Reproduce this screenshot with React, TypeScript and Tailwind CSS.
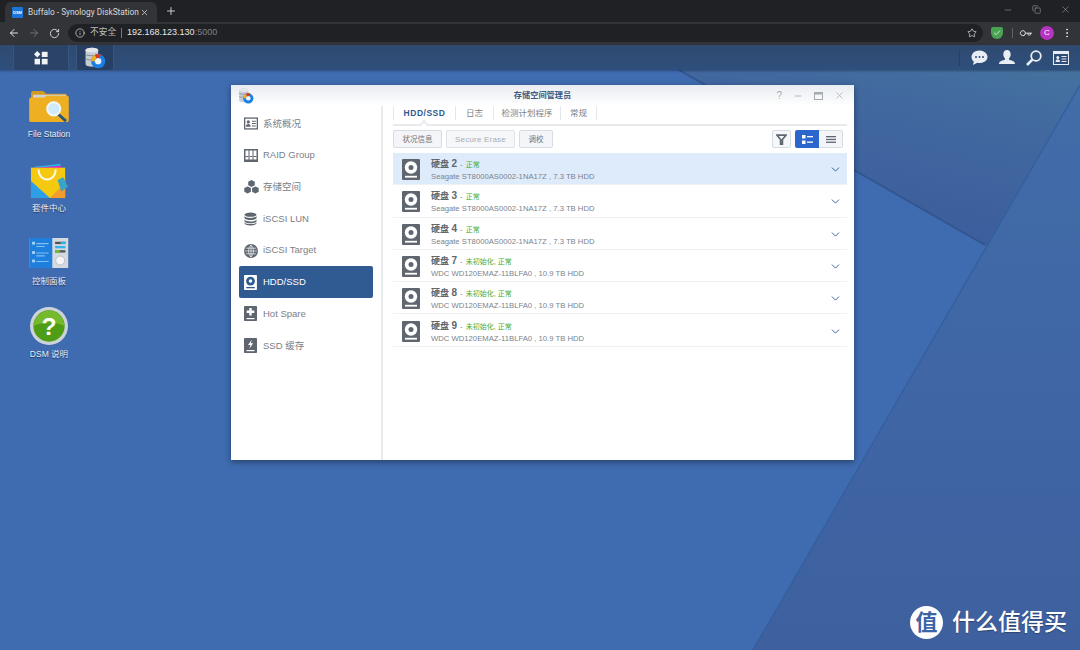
import React from 'react';
import { ArrowLeft, ArrowRight, RotateCw, Info, Star, X, Plus, Minus, Copy, ChevronDown, MoreVertical, Key, Check } from 'lucide-react';

const FONT = "font-['Liberation_Sans','Noto_Sans_CJK_SC',sans-serif]";

const HddIcon = ({ light = false, width = 18, height = 21 }: { light?: boolean; width?: number; height?: number }) => (
  <svg width={width} height={height} viewBox="0 0 18 21">
    <rect width="18" height="21" rx="1" fill={light ? '#fff' : '#5f6670'} />
    <circle cx="9" cy="8.5" r="6.2" fill={light ? '#2f5a92' : '#fff'} />
    <circle cx="9" cy="8.5" r="2.5" fill={light ? '#fff' : '#5f6670'} />
    <rect x="3" y="16.8" width="12" height="1.8" fill={light ? '#2f5a92' : '#fff'} />
  </svg>
);

const StorageLogo = ({ size = 28 }: { size?: number }) => (
  <svg width={size} height={size} viewBox="0 0 28 28">
    <path d="M2 4c0-2 4-3 8-3s8 1 8 3v18c0 2-4 3-8 3s-8-1-8-3z" fill="#c6ccd3" />
    <ellipse cx="10" cy="4" rx="8" ry="3" fill="#e4e7ea" />
    <path d="M2 9.500c2 2 14 2 16 0M2 15c2 2 14 2 16 0" stroke="#7f8a96" strokeWidth="1.200" fill="none" />
    <circle cx="18" cy="18" r="9" fill="#1b80e4" />
    <circle cx="18" cy="18" r="4" fill="#eef4fb" />
    <path d="M9 18a9 9 0 0 1 5-8l2 4.400A4 4 0 0 0 14 18z" fill="#f2b01f" />
    <path d="M14 10a9 9 0 0 1 7.500-.400l-1.700 4.800a4 4 0 0 0-3.800 0z" fill="#d93a25" />
  </svg>
);

const SideIcon = ({ name }: { name: string }) => {
  const c = '#5f6670';
  if (name === 'overview')
    return (
      <svg width="14" height="13" viewBox="0 0 15 13">
        <rect x=".7" y=".7" width="13.600" height="11.600" fill="#fff" stroke={c} strokeWidth="1.400" />
        <circle cx="4.600" cy="4.800" r="1.700" fill={c} />
        <path d="M2 10c0-2 1.200-3 2.600-3s2.600 1 2.600 3z" fill={c} />
        <path d="M8.500 4h4.200M8.500 6.600h4.200M8.500 9.200h4.200" stroke={c} strokeWidth="1.100" />
      </svg>
    );
  if (name === 'raid')
    return (
      <svg width="14" height="13" viewBox="0 0 14 13">
        <rect width="14" height="13" fill={c} />
        <path d="M1.500 1.500h3v9h-3zM5.500 1.500h3v9h-3zM9.500 1.500h3v9h-3z" fill="#fff" />
        <path d="M1.500 7.500h3M5.500 7.500h3M9.500 7.500h3" stroke={c} />
      </svg>
    );
  if (name === 'space')
    return (
      <svg width="15" height="14" viewBox="0 0 15 14" fill={c}>
        <path d="M7.500 0l3.300 1.700v3.600L7.500 7 4.200 5.300V1.700z" />
        <path d="M3.600 6.400l3.300 1.700v3.600l-3.300 1.700-3.300-1.700V8.100z" />
        <path d="M11.400 6.400l3.300 1.700v3.600l-3.300 1.700-3.300-1.700V8.100z" />
      </svg>
    );
  if (name === 'lun')
    return (
      <svg width="13" height="14" viewBox="0 0 14 14" fill={c}>
        <ellipse cx="7" cy="2.300" rx="6.500" ry="2.300" />
        <path d="M.5 3.800c1 1.500 3.500 2 6.500 2s5.500-.5 6.500-2v2.200c-.6 1.500-3.300 2.200-6.500 2.200S1.100 7.500.5 6z" />
        <path d="M.5 7.600c1 1.500 3.500 2 6.500 2s5.500-.5 6.500-2v1.800c-.6 1.500-3.300 2.200-6.500 2.200S1.100 10.900.5 9.400z" />
        <path d="M.5 10.700c1 1.300 3.500 1.800 6.500 1.800s5.500-.5 6.500-1.800v.9c-.6 1.500-3.300 2.400-6.500 2.400S1.100 13.100.5 11.600z" />
      </svg>
    );
  if (name === 'target')
    return (
      <svg width="14" height="14" viewBox="0 0 15 15">
        <circle cx="7.500" cy="7.500" r="7.500" fill={c} />
        <path d="M7.500 1v13M1 7.500h13M2 4.500h11M2 10.500h11M7.500 1C4 4.500 4 10.500 7.500 14M7.500 1C11 4.500 11 10.500 7.500 14" stroke="#fff" strokeWidth=".7" fill="none" />
      </svg>
    );
  if (name === 'hdd') return <HddIcon light width={13} height={15} />;
  return (
    <svg width="13" height="15" viewBox="0 0 13 15">
      <rect width="13" height="15" rx=".8" fill={c} />
      {name === 'spare' ? (
        <path d="M5.300 2h2.400v2.600h2.600V7H7.700v2.600H5.300V7H2.700V4.600h2.600z" fill="#fff" />
      ) : (
        <path d="M7.800 1.800L4 7h2.400l-1 3.500L9.300 5.300H6.900z" fill="#fff" />
      )}
      <rect x="2.500" y="12" width="8" height="1.200" fill="#fff" />
    </svg>
  );
};

const sideItems = [
  { key: 'overview', label: '系统概况' },
  { key: 'raid', label: 'RAID Group' },
  { key: 'space', label: '存储空间' },
  { key: 'lun', label: 'iSCSI LUN' },
  { key: 'target', label: 'iSCSI Target' },
  { key: 'hdd', label: 'HDD/SSD' },
  { key: 'spare', label: 'Hot Spare' },
  { key: 'ssd', label: 'SSD 缓存' },
];

const seagate = 'Seagate ST8000AS0002-1NA17Z , 7.3 TB HDD';
const wdc = 'WDC WD120EMAZ-11BLFA0 , 10.9 TB HDD';
const disks = [
  { n: 2, status: '正常', model: seagate },
  { n: 3, status: '正常', model: seagate },
  { n: 4, status: '正常', model: seagate },
  { n: 7, status: '未初始化, 正常', model: wdc },
  { n: 8, status: '未初始化, 正常', model: wdc },
  { n: 9, status: '未初始化, 正常', model: wdc },
];

// desktop wallpaper facets, coordinates are relative to the desktop area (y - 70)
const Wallpaper = () => (
  <svg className="absolute inset-0" width="1080" height="580" viewBox="0 0 1080 580">
    <defs>
      <linearGradient id="facetTop" x1="1" y1="0" x2="0.5" y2="1">
        <stop offset="0" stopColor="#44729f" />
        <stop offset="0.4" stopColor="#41679f" />
        <stop offset="1" stopColor="#3b5c9c" />
      </linearGradient>
      <linearGradient id="facetRight" x1="0.6" y1="0" x2="0.6" y2="1">
        <stop offset="0" stopColor="#416da9" />
        <stop offset="0.5" stopColor="#4066a5" />
        <stop offset="1" stopColor="#3e609f" />
      </linearGradient>
    </defs>
    <rect width="1080" height="580" fill="#3f6bb0" />
    <polygon points="679,0 1080,0 1080,15 987,176" fill="url(#facetTop)" />
    <polygon points="987,176 1080,15 1080,580 753,580" fill="url(#facetRight)" />
    <path d="M679 0L985 175" stroke="#32568f" strokeWidth="2" fill="none" />
    <path d="M1080 15L987 176L753 580" stroke="#35609f" strokeWidth="1.500" fill="none" />
  </svg>
);

const DesktopIcon = ({ label, top, children }: { label: string; top: number; children: React.ReactNode }) => (
  <div className="absolute left-[9px] w-[80px] flex flex-col items-center" style={{ top }}>
    <div className="h-[40px] flex items-center justify-center">{children}</div>
    <span className="mt-[3px] text-[8.5px] leading-[11px] text-[#e9eff8] [text-shadow:0_1px_1px_rgba(0,0,0,0.5)]">{label}</span>
  </div>
);

const Folder = () => (
  <svg width="40" height="33" viewBox="0 0 42 35">
    <path d="M2 3q0-2 2-2h11l3 3h20q2 0 2 2v5H2z" fill="#d19a20" />
    <rect x="4" y="5" width="35" height="6" fill="#cfd3d6" />
    <path d="M0 10q0-2 2-2h14l2-2h22q2 0 2 2v24q0 2-2 2H2q-2 0-2-2z" fill="#eeb022" />
    <path d="M28 23l11 10" stroke="#28567f" strokeWidth="3" />
    <circle cx="26" cy="20" r="7" fill="#cfeafb" stroke="#f4f7fa" strokeWidth="2" />
  </svg>
);

const Bag = () => (
  <svg width="40" height="38" viewBox="0 0 42 40">
    <path d="M6 6l27-3 1 8H7z" fill="#28b5e0" />
    <path d="M6 7l28-2v6H6z" fill="#d41fd0" />
    <rect x="2" y="7" width="36" height="32" fill="#f5c90f" />
    <path d="M2 21l20 18H2z" fill="#2e9fe6" />
    <path d="M22 39l16-16v16z" fill="#f29b2e" />
    <path d="M10 9c0 14 18 14 18 0" stroke="#fff8e6" strokeWidth="2" fill="none" />
    <path d="M30 20l6-3 5 10-7 5z" fill="#3aa3c8" />
  </svg>
);

const Panel = () => (
  <svg width="40" height="30" viewBox="0 0 41 32">
    <rect width="41" height="32" fill="#d5dadf" />
    <rect width="24" height="32" fill="#1f7fdd" />
    <path d="M7 6h13M7 9h9M7 16h13M7 19h9M7 25h13" stroke="#7fc1f5" strokeWidth="1.200" />
    <rect x="2.500" y="4" width="3" height="3" fill="#a6d5f8" />
    <rect x="2.500" y="14" width="3" height="3" fill="#a6d5f8" />
    <rect x="2.500" y="23" width="3" height="3" fill="#a6d5f8" />
    <rect x="27" y="4" width="11" height="2.500" fill="#555" />
    <rect x="33" y="4" width="5" height="2.500" fill="#2fb4e8" />
    <rect x="27" y="8.500" width="11" height="2.500" fill="#2fb4e8" />
    <rect x="27" y="13" width="11" height="2.500" fill="#555" />
    <rect x="27" y="13" width="5" height="2.500" fill="#6cc625" />
    <circle cx="32.500" cy="24" r="4.800" fill="#f3f5f7" stroke="#b6bec6" />
  </svg>
);

const Help = () => (
  <svg width="38" height="38" viewBox="0 0 40 40">
    <circle cx="20" cy="20" r="20" fill="#ccd3d8" />
    <circle cx="20" cy="20" r="16.500" fill="#4e9d14" />
    <path d="M4 20a16 16 0 0 1 32 0c-8-5-24-5-32 0z" fill="#74ba2c" />
    <text x="20" y="29" textAnchor="middle" fontFamily="Liberation Sans" fontWeight="700" fontSize="26" fill="#fff">?</text>
  </svg>
);

export default function App() {
  return (
    <div className={`w-[1080px] h-[650px] overflow-hidden flex flex-col bg-[#3f6bb0] ${FONT}`}>
      {/* browser tab strip */}
      <div className="h-[22px] bg-[#202124] flex items-end pl-[5px] relative shrink-0">
        <div className="w-[152px] h-[20px] bg-[#323437] rounded-t-[6px] flex items-center pl-[7px] text-[#d8dadc]">
          <span className="w-[11px] h-[11px] bg-[#1b74d8] rounded-[1px] text-white text-[4px] leading-[11px] text-center font-bold mr-[5px]">DSM</span>
          <span className="flex-1 text-[8.3px] font-['Roboto',sans-serif] whitespace-nowrap">Buffalo - Synology DiskStation</span>
          <X size={9} strokeWidth={2} className="mr-[8px] text-[#d8dadc]" />
        </div>
        <Plus size={12} strokeWidth={1.8} className="ml-[8px] mb-[5px] text-[#d8dadc]" />
        <div className="ml-auto flex items-center gap-[19px] pr-[9px] mb-[7px] text-[#a9abae]">
          <Minus size={10} strokeWidth={1.2} />
          <Copy size={9} strokeWidth={1.4} />
          <X size={11} strokeWidth={1.2} />
        </div>
      </div>
      {/* address bar */}
      <div className="h-[23px] bg-[#323437] flex items-center shrink-0 pb-[1px]">
        <ArrowLeft size={12} strokeWidth={2} className="ml-[8px] text-[#e2e3e5]" />
        <ArrowRight size={12} strokeWidth={2} className="ml-[8px] text-[#6f7174]" />
        <RotateCw size={11} strokeWidth={2} className="ml-[9px] text-[#dcdde0]" />
        <div className="ml-[8px] w-[915px] h-[18px] rounded-full bg-[#202124] flex items-center pl-[7px] pr-[6px]">
          <Info size={10} strokeWidth={1.8} className="text-[#d5d6d8]" />
          <span className="ml-[5px] text-[#b8babc] text-[8.7px]">不安全</span>
          <span className="mx-[5px] w-px h-[10px] bg-[#77797c]" />
          <span className="text-[#e6e7e9] text-[9px]">192.168.123.130</span>
          <span className="text-[#7f8184] text-[9px]">:5000</span>
          <Star size={10} strokeWidth={1.8} className="ml-auto text-[#d5d6d8]" />
        </div>
        <div className="ml-[8px] w-[12px] h-[12px] bg-[#4aa255] rounded-b-[6px] rounded-t-[2px] flex items-center justify-center">
          <Check size={8} strokeWidth={3} className="text-[#cfe9d2]" />
        </div>
        <span className="ml-[9px] w-px h-[10px] bg-[#5f6164]" />
        <Key size={11} strokeWidth={2} className="ml-[7px] text-[#dcdde0] rotate-45" />
        <span className="ml-[9px] w-[14px] h-[14px] rounded-full bg-[#b632c0] text-white text-[8px] leading-[14px] text-center">C</span>
        <MoreVertical size={12} strokeWidth={2} className="ml-[7px] text-[#dcdde0]" />
      </div>
      {/* DSM task bar */}
      <div className="h-[25px] bg-gradient-to-b from-[#2f4a70] to-[#2e4f7c] flex items-stretch relative shrink-0 shadow-[0_1px_2px_rgba(0,0,0,0.3)] z-10">
        <div className="ml-[13px] w-[56px] bg-[#2a4367] border-x border-[#38557d] flex items-center justify-center">
          <svg width="14" height="14" viewBox="0 0 14 14" fill="#f1f3f5">
            <path d="M3.200 0l3.200 3.200-3.200 3.200L0 3.200z" />
            <rect x="7.800" y=".8" width="5.800" height="5.200" />
            <rect x=".6" y="7.800" width="5.400" height="5.600" />
            <rect x="7.800" y="7.800" width="5.800" height="5.600" />
          </svg>
        </div>
        <div className="ml-[7px] w-[38px] bg-[#263f62] border-x border-[#38557d] flex items-center justify-center">
          <StorageLogo size={22} />
        </div>
        <div className="ml-auto flex items-center pr-[11px] gap-[11px]">
          <span className="w-px h-[16px] bg-[#263f62]" />
          <svg width="17" height="16" viewBox="0 0 17 16">
            <path d="M8.500 .5C4 .5.5 3.300.5 7c0 1.800.9 3.400 2.300 4.600L2 15l4.200-2.200c.7.200 1.500.3 2.300.3 4.500 0 8-2.800 8-6.100S13 .5 8.500 .5z" fill="#e8edf3" />
            <circle cx="5" cy="7" r="1" fill="#2e4c75" />
            <circle cx="8.500" cy="7" r="1" fill="#2e4c75" />
            <circle cx="12" cy="7" r="1" fill="#2e4c75" />
          </svg>
          <svg width="16" height="15" viewBox="0 0 16 15" fill="#e8edf3">
            <path d="M8 0c2.300 0 3.700 1.700 3.700 4.200 0 2-.9 3.400-1.700 4.400v1.200c2 .7 6 1 6 4.200H0c0-3.200 4-3.500 6-4.200V8.600C5.200 7.600 4.300 6.200 4.300 4.200 4.300 1.700 5.700 0 8 0z" />
          </svg>
          <svg width="16" height="16" viewBox="0 0 16 16" fill="none" stroke="#e8edf3">
            <circle cx="10" cy="6" r="4.800" strokeWidth="1.800" />
            <path d="M6.300 9.700L1 15" strokeWidth="2.600" />
          </svg>
          <svg width="16" height="14" viewBox="0 0 16 14">
            <rect x=".5" y=".5" width="15" height="13" fill="#2e4c75" stroke="#e8edf3" />
            <rect x="1" y="1" width="14" height="2" fill="#e8edf3" />
            <circle cx="4.800" cy="6.400" r="1.500" fill="#e8edf3" />
            <path d="M2.500 11c0-2 1-2.800 2.300-2.800S7 9 7 11z" fill="#e8edf3" />
            <path d="M8.500 5.500h5M8.500 8h5M8.500 10.500h5" stroke="#e8edf3" />
          </svg>
        </div>
      </div>

      {/* desktop */}
      <div className="relative flex-1">
        <Wallpaper />
        <DesktopIcon label="File Station" top={16}><Folder /></DesktopIcon>
        <DesktopIcon label="套件中心" top={90}><Bag /></DesktopIcon>
        <DesktopIcon label="控制面板" top={163}><Panel /></DesktopIcon>
        <DesktopIcon label="DSM 说明" top={236}><Help /></DesktopIcon>

        {/* storage manager window */}
        <div className="absolute left-[231px] top-[15px] w-[623px] h-[375px] bg-white flex flex-col shadow-[0_2px_6px_rgba(0,0,0,0.4)]">
          <div className="h-[21px] bg-gradient-to-b from-[#e9ecf1] to-white flex items-center relative shrink-0">
            <span className="ml-[7px] mt-[1px] flex"><StorageLogo size={16} /></span>
            <span className="absolute left-0 right-0 text-center text-[8.2px] font-bold text-[#3d5a7f] mt-[1px]">存储空间管理员</span>
            <div className="ml-auto mr-[9px] flex items-center gap-[11px] text-[#a3aab2]">
              <span className="text-[10px] leading-none">?</span>
              <Minus size={10} strokeWidth={2} />
              <svg width="9" height="8" viewBox="0 0 9 8" fill="none" stroke="currentColor">
                <rect x=".5" y=".5" width="8" height="7" />
                <rect x=".5" y=".5" width="8" height="1.500" fill="currentColor" />
              </svg>
              <X size={11} strokeWidth={1.6} />
            </div>
          </div>
          <div className="flex-1 flex min-h-0">
            {/* side menu */}
            <div className="w-[152px] border-r-2 border-[#e8ebee] shrink-0 pl-[8px] pr-[8px] pt-[2px]">
              {sideItems.map((item) => {
                const active = item.key === 'hdd';
                return (
                  <div
                    key={item.key}
                    className={`h-[31.7px] flex items-center rounded-[2px] text-[9.5px] ${active ? 'bg-[#2f5a92] text-white' : 'text-[#7a8088]'}`}
                  >
                    <span className="w-[19px] ml-[5px] flex items-center justify-start"><SideIcon name={item.key} /></span>
                    <span>{item.label}</span>
                  </div>
                );
              })}
            </div>
            {/* main panel */}
            <div className="flex-1 min-w-0 pl-[10px] pr-[7px] flex flex-col">
              <div className="h-[18px] flex items-start text-[8.5px] text-[#7c838b] border-b-2 border-[#e8ebee] box-content relative">
                <div className="w-[63px] h-[14px] flex items-center justify-center font-bold text-[#2f5a92] border-x border-[#e4e8ec] tracking-[0.5px]">HDD/SSD</div>
                <div className="w-[38px] h-[14px] flex items-center justify-center border-r border-[#e4e8ec]">日志</div>
                <div className="w-[67px] h-[14px] flex items-center justify-center border-r border-[#e4e8ec]">检测计划程序</div>
                <div className="w-[36px] h-[14px] flex items-center justify-center border-r border-[#e4e8ec]">常规</div>
                <span className="absolute left-[28px] bottom-[-3px] w-[6px] h-[6px] rotate-45 bg-white border-l-2 border-t-2 border-[#e8ebee]" />
              </div>
              <div className="flex items-center mt-[4px] h-[18px] text-[7.5px]">
                <button className="h-[18px] w-[49px] pt-[1px] bg-[#f3f5f8] border border-[#d6dce3] rounded-[2px] text-[#6d747c]">状况信息</button>
                <button className="ml-[4px] h-[18px] w-[69px] pt-[1px] bg-[#f5f7f9] border border-[#dfe4ea] rounded-[2px] text-[#a6adb5] text-[8px] tracking-[0.2px]">Secure Erase</button>
                <button className="ml-[4px] h-[18px] w-[34px] pt-[1px] bg-[#f3f5f8] border border-[#d6dce3] rounded-[2px] text-[#6d747c]">调校</button>
                <button className="ml-auto h-[18px] w-[19px] bg-[#f5f7f9] border border-[#d6dce3] rounded-[2px] flex items-center justify-center">
                  <svg width="11" height="11" viewBox="0 0 11 11" fill="none" stroke="#5f6670" strokeWidth="1.700">
                    <path d="M1 1.200h9L6.400 5.500v5H4.600v-5z" />
                  </svg>
                </button>
                <button className="ml-[4px] h-[18px] w-[24px] bg-[#2a66cc] rounded-l-[2px] flex items-center justify-center">
                  <svg width="11" height="9" viewBox="0 0 11 9" fill="#fff">
                    <rect width="3.500" height="3.500" />
                    <rect y="5.500" width="3.500" height="3.500" />
                    <rect x="5" y="1" width="6" height="1.300" />
                    <rect x="5" y="6.500" width="6" height="1.300" />
                  </svg>
                </button>
                <button className="h-[18px] w-[24px] bg-[#f3f5f8] border border-l-0 border-[#d6dce3] rounded-r-[2px] flex items-center justify-center mr-[4px]">
                  <svg width="10" height="7" viewBox="0 0 10 7" fill="#5f6670">
                    <rect width="10" height="1.300" />
                    <rect y="2.800" width="10" height="1.300" />
                    <rect y="5.600" width="10" height="1.300" />
                  </svg>
                </button>
              </div>
              <div className="mt-[5px]">
                {disks.map((d, i) => (
                  <div
                    key={d.n}
                    className={`h-[32.3px] pt-[2px] flex items-center border-b border-[#eef1f5] ${i === 0 ? 'bg-[#deebfb]' : ''}`}
                  >
                    <span className="ml-[9px] flex"><HddIcon /></span>
                    <div className="ml-[11px] flex-1 min-w-0 flex flex-col pt-[1px]">
                      <div className="flex items-baseline leading-[12px] h-[12px] whitespace-pre">
                        <span className="text-[9px] font-bold text-[#5f666e]">硬盘 <span className="text-[10px]">{d.n}</span></span>
                        <span className="ml-[3px] text-[8px] text-[#7c838b]">-</span>
                        <span className="ml-[3px] text-[7px] text-[#45ab33]">{d.status}</span>
                      </div>
                      <span className="mt-[2px] text-[7.7px] leading-[10px] text-[#7c838b]">{d.model}</span>
                    </div>
                    <ChevronDown size={13} strokeWidth={1.8} className="mr-[5px] text-[#34609a]" />
                  </div>
                ))}
              </div>
            </div>
          </div>
        </div>

        {/* watermark */}
        <div className="absolute left-[910px] top-[536px] flex items-center text-white [text-shadow:0_1px_1px_rgba(0,0,0,0.3)]">
          <span className="w-[33px] h-[33px] rounded-full bg-white text-[#3c64a6] text-[22px] leading-[33px] text-center font-bold [text-shadow:none]">值</span>
          <span className="ml-[9px] text-[23px] leading-[33px] font-medium">什么值得买</span>
        </div>
      </div>
    </div>
  );
}
